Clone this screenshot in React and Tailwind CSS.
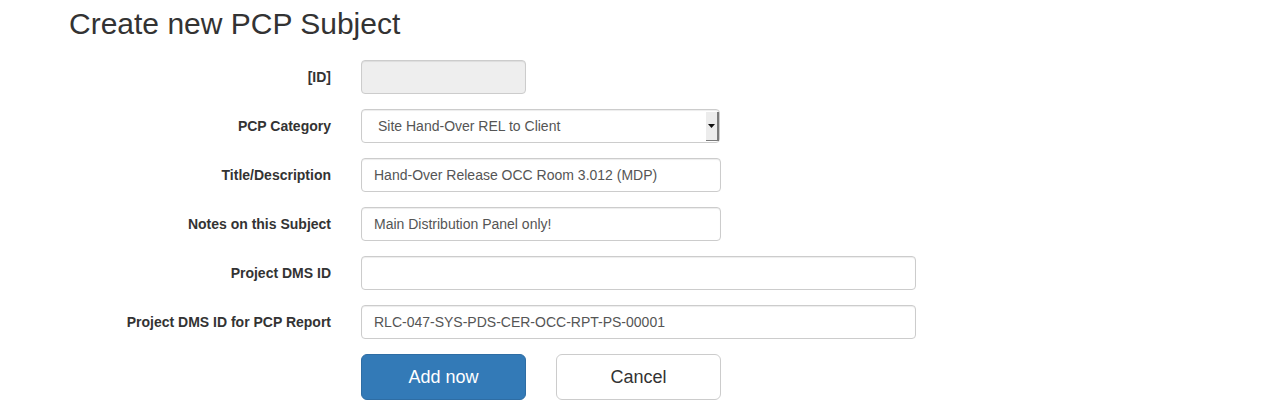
import React from "react";

const font = { fontFamily: '"Liberation Sans", Arial, sans-serif' };

const TextInput = ({ value = "", width = "w-[360px]", disabled = false }) => (
  <input
    type="text"
    readOnly
    value={value}
    disabled={disabled}
    className={`${width} h-[34px] rounded-[4px] border border-[#ccc] px-[12px] text-[14px] text-[#555] shadow-[inset_0_1px_1px_rgba(0,0,0,0.075)] focus:outline-none ${
      disabled ? "bg-[#eee]" : "bg-white"
    }`}
  />
);

const FakeSelect = ({ value }) => (
  <div className="flex w-[359px] h-[34px] items-stretch rounded-[4px] border border-[#ccc] bg-white shadow-[inset_0_1px_1px_rgba(0,0,0,0.075)]">
    <div className="flex-1 flex items-center pl-[16px] text-[14px] text-[#555]">
      {value}
    </div>
    <div className="mt-[2px] mb-[1px] w-[13px] flex items-center justify-center bg-[#ececec] border-r-[2px] border-b border-[#7a7a7a]">
      <svg width="7" height="4" viewBox="0 0 7 4">
        <path d="M0 0 L7 0 L3.5 4 Z" fill="#111" />
      </svg>
    </div>
  </div>
);

const Row = ({ label, children }) => (
  <>
    <label className="flex h-[34px] items-center justify-end text-[14px] font-bold text-[#333]">
      {label}
    </label>
    <div className="flex items-center">{children}</div>
  </>
);

export default function App() {
  return (
    <div className="bg-white min-h-screen px-[69px] text-[#333]" style={font}>
      <h2 className="pt-[7px] text-[30px] leading-[33px] font-medium text-[#333]">
        Create new PCP Subject
      </h2>

      <form className="mt-[20px] grid grid-cols-[262px_1fr] gap-x-[30px] gap-y-[15px]">
        <Row label="[ID]">
          <TextInput width="w-[165px]" disabled />
        </Row>
        <Row label="PCP Category">
          <FakeSelect value="Site Hand-Over REL to Client" />
        </Row>
        <Row label="Title/Description">
          <TextInput value="Hand-Over Release OCC Room 3.012 (MDP)" />
        </Row>
        <Row label="Notes on this Subject">
          <TextInput value="Main Distribution Panel only!" />
        </Row>
        <Row label="Project DMS ID">
          <TextInput width="w-[555px]" />
        </Row>
        <Row label="Project DMS ID for PCP Report">
          <TextInput
            width="w-[555px]"
            value="RLC-047-SYS-PDS-CER-OCC-RPT-PS-00001"
          />
        </Row>
        <div />
        <div className="flex gap-[30px]">
          <button
            type="button"
            className="w-[165px] h-[46px] rounded-[6px] border border-[#2e6da4] bg-[#337ab7] text-[18px] text-white"
          >
            Add now
          </button>
          <button
            type="button"
            className="w-[165px] h-[46px] rounded-[6px] border border-[#ccc] bg-white text-[18px] text-[#333]"
          >
            Cancel
          </button>
        </div>
      </form>
    </div>
  );
}
